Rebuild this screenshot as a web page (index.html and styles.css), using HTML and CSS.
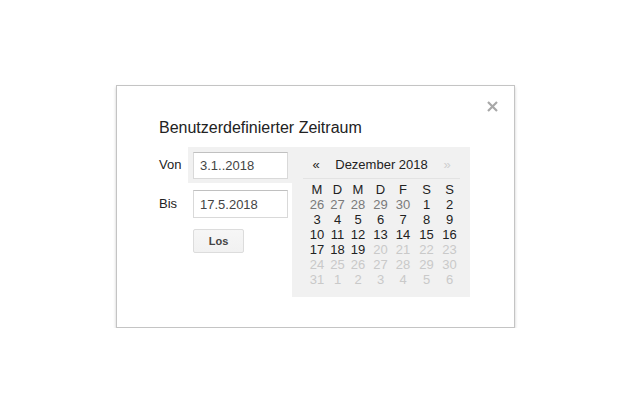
FILE: index.html
```html
<!DOCTYPE html>
<html lang="de">
<head>
<meta charset="utf-8">
<title>Benutzerdefinierter Zeitraum</title>
<link rel="stylesheet" href="styles.css">
</head>
<body>
<div class="page">
  <div class="dialog">
    <button class="close" aria-label="Schließen">
      <svg width="11" height="11" viewBox="0 0 11 11"><path d="M1 1L10 10M10 1L1 10" stroke="#a8a8a8" stroke-width="2.2" fill="none"/></svg>
    </button>
    <div class="title">Benutzerdefinierter Zeitraum</div>
    <div class="main">
      <div class="form">
        <div class="row">
          <span class="label">Von</span>
          <div class="field active"><input class="input" type="text" value="3.1..2018"></div>
        </div>
        <div class="row row-bis">
          <span class="label">Bis</span>
          <div class="field"><input class="input" type="text" value="17.5.2018"></div>
        </div>
        <button class="go">Los</button>
      </div>
      <div class="calendar">
        <div class="cal-head">
          <span class="nav">«</span>
          <span class="month">Dezember 2018</span>
          <span class="nav disabled">»</span>
        </div>
        <div class="days">
          <span class="wd">M</span><span class="wd">D</span><span class="wd">M</span><span class="wd">D</span><span class="wd">F</span><span class="wd">S</span><span class="wd">S</span>
          <span class="prev">26</span><span class="prev">27</span><span class="prev">28</span><span class="prev">29</span><span class="prev">30</span><span>1</span><span>2</span>
          <span>3</span><span>4</span><span>5</span><span>6</span><span>7</span><span>8</span><span>9</span>
          <span>10</span><span>11</span><span>12</span><span>13</span><span>14</span><span>15</span><span>16</span>
          <span>17</span><span>18</span><span>19</span><span class="off">20</span><span class="off">21</span><span class="off">22</span><span class="off">23</span>
          <span class="off">24</span><span class="off">25</span><span class="off">26</span><span class="off">27</span><span class="off">28</span><span class="off">29</span><span class="off">30</span>
          <span class="off">31</span><span class="off">1</span><span class="off">2</span><span class="off">3</span><span class="off">4</span><span class="off">5</span><span class="off">6</span>
        </div>
      </div>
    </div>
  </div>
</div>
</body>
</html>
```
FILE: styles.css
```css
html, body {
  margin: 0;
  padding: 0;
  background: #fff;
}
body {
  font-family: "Liberation Sans", Arial, sans-serif;
  color: #222;
}
.page {
  padding: 85px 0 0 116px;
}
.dialog {
  position: relative;
  box-sizing: border-box;
  width: 399px;
  background: #fff;
  border: 1px solid #c4c4c4;
  box-shadow: 0 2px 3px rgba(0,0,0,0.2);
  padding: 32px 0 30px 42px;
}
.close {
  position: absolute;
  top: 15px;
  right: 16px;
  width: 11px;
  height: 11px;
  padding: 0;
  margin: 0;
  border: 0;
  background: none;
  display: block;
}
.close svg { display: block; }
.title {
  font-size: 16px;
  line-height: 20px;
  height: 20px;
  margin-bottom: 9px;
  color: #222;
}
.main {
  display: flex;
  align-items: flex-start;
}
.form {
  display: flex;
  flex-direction: column;
  align-items: flex-start;
}
.row {
  display: flex;
  align-items: center;
}
.label {
  width: 29px;
  font-size: 13px;
  line-height: 16px;
  color: #222;
}
.row-bis .label {
  padding-top: 7px;
}
.field {
  padding: 5px 4px 4px 5px;
}
.field.active {
  background: #f1f1f1;
}
.row-bis .field {
  padding-top: 7px;
  padding-bottom: 0;
}
.input {
  display: block;
  box-sizing: border-box;
  width: 95px;
  height: 27px;
  margin: 0;
  padding: 0 6px;
  border: 1px solid #d9d9d9;
  border-top-color: #c0c0c0;
  border-radius: 0;
  background: #fff;
  font-family: "Liberation Sans", Arial, sans-serif;
  font-size: 13px;
  color: #444;
  outline: none;
}
.row-bis .input {
  height: 28px;
}
.go {
  margin: 11px 0 0 34px;
  box-sizing: border-box;
  width: 51px;
  height: 24px;
  padding: 0;
  border: 1px solid #dcdcdc;
  border-radius: 2px;
  background: linear-gradient(#f6f6f6, #f1f1f1);
  font-family: "Liberation Sans", Arial, sans-serif;
  font-size: 11px;
  font-weight: bold;
  color: #444;
}
.calendar {
  box-sizing: border-box;
  width: 178px;
  height: 150px;
  background: #f1f1f1;
  padding: 8px 10px 10px 11px;
  font-size: 13px;
}
.cal-head {
  display: flex;
  align-items: center;
  height: 20px;
  line-height: 20px;
  padding-bottom: 3px;
  border-bottom: 1px solid #e3e3e3;
}
.nav {
  width: 26px;
  text-align: center;
  color: #222;
  font-size: 13px;
}
.nav.disabled {
  color: #cfcfcf;
}
.month {
  flex: 1;
  text-align: center;
  color: #222;
}
.days {
  display: grid;
  grid-template-columns: 20px 21px 20px 25px 20px 27px 19px;
  grid-auto-rows: 15px;
  margin-top: 3px;
  padding-left: 4px;
  line-height: 15px;
}
.days span {
  text-align: center;
  color: #222;
}
.days .prev {
  color: #7a7a7a;
}
.days .off {
  color: #c9c9c9;
}
```
